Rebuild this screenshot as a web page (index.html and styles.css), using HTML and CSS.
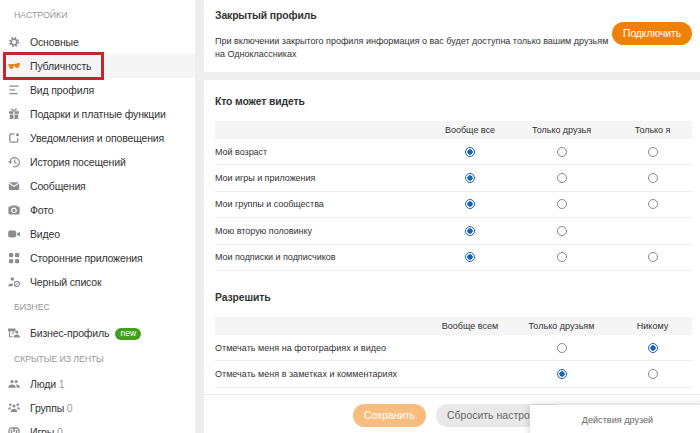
FILE: index.html
```html
<!DOCTYPE html>
<html lang="ru">
<head>
<meta charset="utf-8">
<title>Настройки</title>
<link rel="stylesheet" href="styles.css">
</head>
<body>
<div class="page">
  <nav class="sidebar">
    <h2 class="group">НАСТРОЙКИ</h2>
    <a class="item"><svg class="icon" viewBox="0 0 12 12"><circle cx="6" cy="6" r="2.8" fill="none" stroke="#8c8c8c" stroke-width="1.4"/><circle cx="6" cy="6" r="4.2" fill="none" stroke="#8c8c8c" stroke-width="1.8" stroke-dasharray="1.8 1.5"/></svg><span>Основные</span></a>
    <a class="item active"><svg class="icon accent" viewBox="0 0 12 12"><path d="M0 4.300 5.300 3.900 6 4.200 11.800 2.400 11.600 6.300Q10.800 8.200 8.700 8 7 7.800 6.400 5.800L5.800 5.800Q5.500 9 3.500 9.100 1.500 9.200.900 6.500Z"/></svg><span>Публичность</span></a>
    <a class="item"><svg class="icon" viewBox="0 0 12 12"><path d="M1.500 1.500h9v1.200h-9zM1.500 5.300h5.500v1.200h-5.500zM1.500 9h8v1.200h-8z"/></svg><span>Вид профиля</span></a>
    <a class="item"><svg class="icon" viewBox="0 0 12 12"><path d="M1 3.3h4.4v2.4H1zM6.5 3.3h4.4v2.4H6.5zM1.7 6.5h3.7V11H1.7zM6.5 6.5h3.7V11H6.5z"/><path d="M5.8 3C3 3 2.6 1 4 1S5.800 3 5.800 3 6.500 1 8 1 9 3 5.800 3" fill="none" stroke="#8c8c8c"/></svg><span>Подарки и платные функции</span></a>
    <a class="item"><svg class="icon" viewBox="0 0 12 12"><path d="M6.500 1.900H3.300Q1.800 1.900 1.800 3.400V8.700Q1.800 10.200 3.300 10.200H8.300Q9.800 10.200 9.800 8.700V6.200" fill="none" stroke="#8c8c8c" stroke-width="1.300"/><circle cx="9.500" cy="2.800" r="1.500"/></svg><span>Уведомления и оповещения</span></a>
    <a class="item"><svg class="icon" viewBox="0 0 12 12"><path d="M2.100 6.500A4.600 4.600 0 1 1 5 10.500M6.700 3.500V6.500L8.600 7.600" fill="none" stroke="#8c8c8c" stroke-width="1.200"/><path d="M0 5.200h4.400L2.200 7.900z"/></svg><span>История посещений</span></a>
    <a class="item"><svg class="icon" viewBox="0 0 12 12"><path d="M1 2.200 6 5.800 11 2.200zM.800 3.400 6 7 11.200 3.400V8.800Q11.200 10 10 10H2Q.800 10 .800 8.800z"/></svg><span>Сообщения</span></a>
    <a class="item"><svg class="icon" viewBox="0 0 12 12"><path fill-rule="evenodd" d="M3.500 1.500h5l.8 1.100h1q1.300 0 1.300 1.300v5q0 1.500-1.500 1.500h-8Q.400 10.400.400 8.900v-5q0-1.300 1.300-1.300h1zM6 3.500a2.900 2.900 0 1 0 .01 0z"/><circle cx="6" cy="6.400" r="1.600"/></svg><span>Фото</span></a>
    <a class="item"><svg class="icon" viewBox="0 0 12 12"><rect x=".2" y="2.500" width="8" height="7" rx="2"/><path d="M8.800 5.700 11.900 3.800V8.400L8.800 6.500z"/></svg><span>Видео</span></a>
    <a class="item"><svg class="icon" viewBox="0 0 12 12"><rect x="1" y="1" width="4.200" height="4.200" rx="1.200"/><rect x="7" y="1" width="4.200" height="4.200" rx="1.200"/><rect x="1" y="7" width="4.200" height="4.200" rx="1.200"/><rect x="7" y="7" width="4.200" height="4.200" rx="1.200"/></svg><span>Сторонние приложения</span></a>
    <a class="item"><svg class="icon" viewBox="0 0 12 12"><circle cx="4.300" cy="3" r="1.800"/><path d="M.300 10.300Q.300 7.200 4.700 7.600L4.500 10.300z"/><circle cx="8.900" cy="7.900" r="2.600" fill="none" stroke="#8c8c8c" stroke-width="1.100"/><path d="M7.100 9.700 10.700 6.100" stroke="#8c8c8c"/></svg><span>Черный список</span></a>
    <h2 class="group">БИЗНЕС</h2>
    <a class="item"><svg class="icon" viewBox="0 0 12 12"><path d="M0 1.500h7.500v2.800H0z"/><path d="M1.500 4.500v5.300h3M5 4.500v3" fill="none" stroke="#8c8c8c" stroke-width="1.100"/><circle cx="8.800" cy="5" r="1.600"/><path d="M5.500 10.500Q6 7.500 8.800 7.500T12 10.500z"/></svg><span>Бизнес-профиль</span><b class="badge">new</b></a>
    <h2 class="group hidden-group">СКРЫТЫЕ ИЗ ЛЕНТЫ</h2>
    <a class="item"><svg class="icon" viewBox="0 0 12 12"><circle cx="4" cy="3.500" r="1.600"/><circle cx="8.200" cy="3.500" r="1.500"/><path d="M.300 9.800Q.300 6.600 4 6.600T7.600 9.800zM8 6.600Q11.800 6.500 11.800 9.800H8.700Q8.700 7.500 8 6.600z"/></svg><span>Люди <i>1</i></span></a>
    <a class="item"><svg class="icon" viewBox="0 0 12 12"><circle cx="6" cy="4" r="1.500"/><circle cx="2.300" cy="2.700" r="1.300"/><circle cx="9.700" cy="2.700" r="1.300"/><path d="M2.800 10Q3 6.700 6 6.700T9.200 10zM0 7.500Q0 5 3 5.200L2.500 7.500zM12 7.500Q12 5 9 5.200L9.500 7.500z"/></svg><span>Группы <i>0</i></span></a>
    <a class="item"><svg class="icon" viewBox="0 0 12 12"><rect x="1" y="2" width="10" height="9" rx="3" fill="none" stroke="#8c8c8c" stroke-width="1.300"/><path d="M6 2v4M3.500 4v3M8.500 4v3" stroke="#8c8c8c" stroke-width="1.500"/></svg><span>Игры <i>0</i></span></a>
    <div class="highlight"></div>
  </nav>
  <main class="content">
    <section class="card closed">
      <div class="closed-text">
        <h1>Закрытый профиль</h1>
        <p>При включении закрытого профиля информация о вас будет доступна только вашим друзьям<br>на Одноклассниках</p>
      </div>
      <button class="btn connect">Подключить</button>
    </section>
    <section class="card access">
      <h1>Кто может видеть</h1>
      <div class="table">
        <div class="row head"><span></span><span>Вообще все</span><span>Только друзья</span><span>Только я</span></div>
        <div class="row"><span>Мой возраст</span><i class="radio on"></i><i class="radio"></i><i class="radio"></i></div>
        <div class="row"><span>Мои игры и приложения</span><i class="radio on"></i><i class="radio"></i><i class="radio"></i></div>
        <div class="row"><span>Мои группы и сообщества</span><i class="radio on"></i><i class="radio"></i><i class="radio"></i></div>
        <div class="row"><span>Мою вторую половинку</span><i class="radio on"></i><i class="radio"></i></div>
        <div class="row"><span>Мои подписки и подписчиков</span><i class="radio on"></i><i class="radio"></i><i class="radio"></i></div>
      </div>
      <h1 class="allow">Разрешить</h1>
      <div class="table allow-table">
        <div class="row head"><span></span><span>Вообще всем</span><span>Только друзьям</span><span>Никому</span></div>
        <div class="row"><span>Отмечать меня на фотографиях и видео</span><b></b><i class="radio"></i><i class="radio on"></i></div>
        <div class="row"><span>Отмечать меня в заметках и комментариях</span><b></b><i class="radio on"></i><i class="radio"></i></div>
      </div>
      <footer class="actions">
        <button class="btn save">Сохранить</button>
        <button class="btn reset">Сбросить настройки</button>
      </footer>
    </section>
  </main>
  <aside class="friends">Действия друзей</aside>
</div>
</body>
</html>
```
FILE: styles.css
```css
* { box-sizing: border-box; }
body { margin: 0; font-family: "Liberation Sans", Arial, sans-serif; color: #333; }
.page { position: relative; display: flex; width: 700px; height: 433px; overflow: hidden; background: #eee; }
.sidebar { position: relative; width: 195px; height: 433px; flex: none; overflow: hidden; background: #fff; padding-top: 1px; }
.group { margin: 0; height: 29px; padding-left: 14px; font-size: 8.8px; letter-spacing: -.03px; line-height: 29px; font-weight: 400; color: #999; white-space: nowrap; }
.item { display: flex; align-items: center; height: 24px; padding-left: 8px; font-size: 10.5px; letter-spacing: -.15px; white-space: nowrap; }
.group:not(:first-child) { height: 27px; line-height: 26px; }
.group.hidden-group { line-height: 28px; letter-spacing: -.13px; }
.item i { font-style: normal; color: #999; }
.active { background: #f5f5f5; }
.icon { width: 12px; height: 12px; margin-right: 10px; flex: none; fill: #8c8c8c; }
.accent { fill: #e3851c; }
.badge { width: 26px; height: 12px; margin: 1px 0 0 6px; border-radius: 6px; background: #43a01c; color: #fff; font-size: 8.5px; letter-spacing: 0; line-height: 11px; font-weight: 400; text-align: center; }
.highlight { position: absolute; left: 3px; top: 52px; width: 101px; height: 28px; border: 3px solid #c1272d; }
.content { display: flex; flex-direction: column; gap: 8px; width: 496px; margin-left: 9px; }
.card { background: #fff; padding-left: 11px; }
h1 { margin: 0; font-size: 10.4px; letter-spacing: -.12px; line-height: 16px; height: 14px; font-weight: 700; white-space: nowrap; }
p { margin: 13px 0 0; font-size: 9px; letter-spacing: 0; line-height: 13px; white-space: nowrap; }
.closed { display: flex; height: 72px; padding-top: 8px; }
.closed-text { width: 397px; }
.btn { border: 0; padding: 0; border-radius: 12px; height: 23px; font: 10.4px/23px "Liberation Sans", Arial, sans-serif; letter-spacing: -.08px; white-space: nowrap; }
.connect { width: 80px; margin-top: 14px; background: #ee8208; color: #fff; }
.access { height: 353px; padding-top: 14px; }
.table { width: 477px; margin-top: 13px; }
.row { display: grid; grid-template-columns: 209px 92px 91px 85px; align-items: center; height: 26.4px; border-bottom: 1px solid #eee; font-size: 9px; letter-spacing: -.03px; white-space: nowrap; }
.allow-table .row { letter-spacing: .02px; }
.row > :not(:first-child) { justify-self: center; }
.row > :nth-child(4) { margin-left: 6px; }
.head.row { height: 18px; background: #f5f5f5; border: 0; }
.radio { width: 10px; height: 10px; border: 1.3px solid #888; border-radius: 50%; }
.radio.on { border-color: #1763b8; background: radial-gradient(circle, #1763b8 0 2.4px, #fff 3px); }
.allow { margin-top: 19px; }
.actions { display: flex; gap: 10px; margin: 6px 0 0 -11px; padding: 9px 0 0 149px; height: 40px; border-top: 1px solid #e9e9e9; }
.save { width: 73px; background: #f7bd7f; color: #fff; }
.reset { width: 130px; padding-left: 11px; background: #e8e8e8; color: #666; text-align: left; letter-spacing: .05px; }
.friends { position: absolute; left: 530px; top: 405px; width: 175px; height: 40px; background: #fff; box-shadow: 0 0 7px rgba(0,0,0,.2); font-size: 9.1px; line-height: 31px; color: #666; text-align: center; }
```
